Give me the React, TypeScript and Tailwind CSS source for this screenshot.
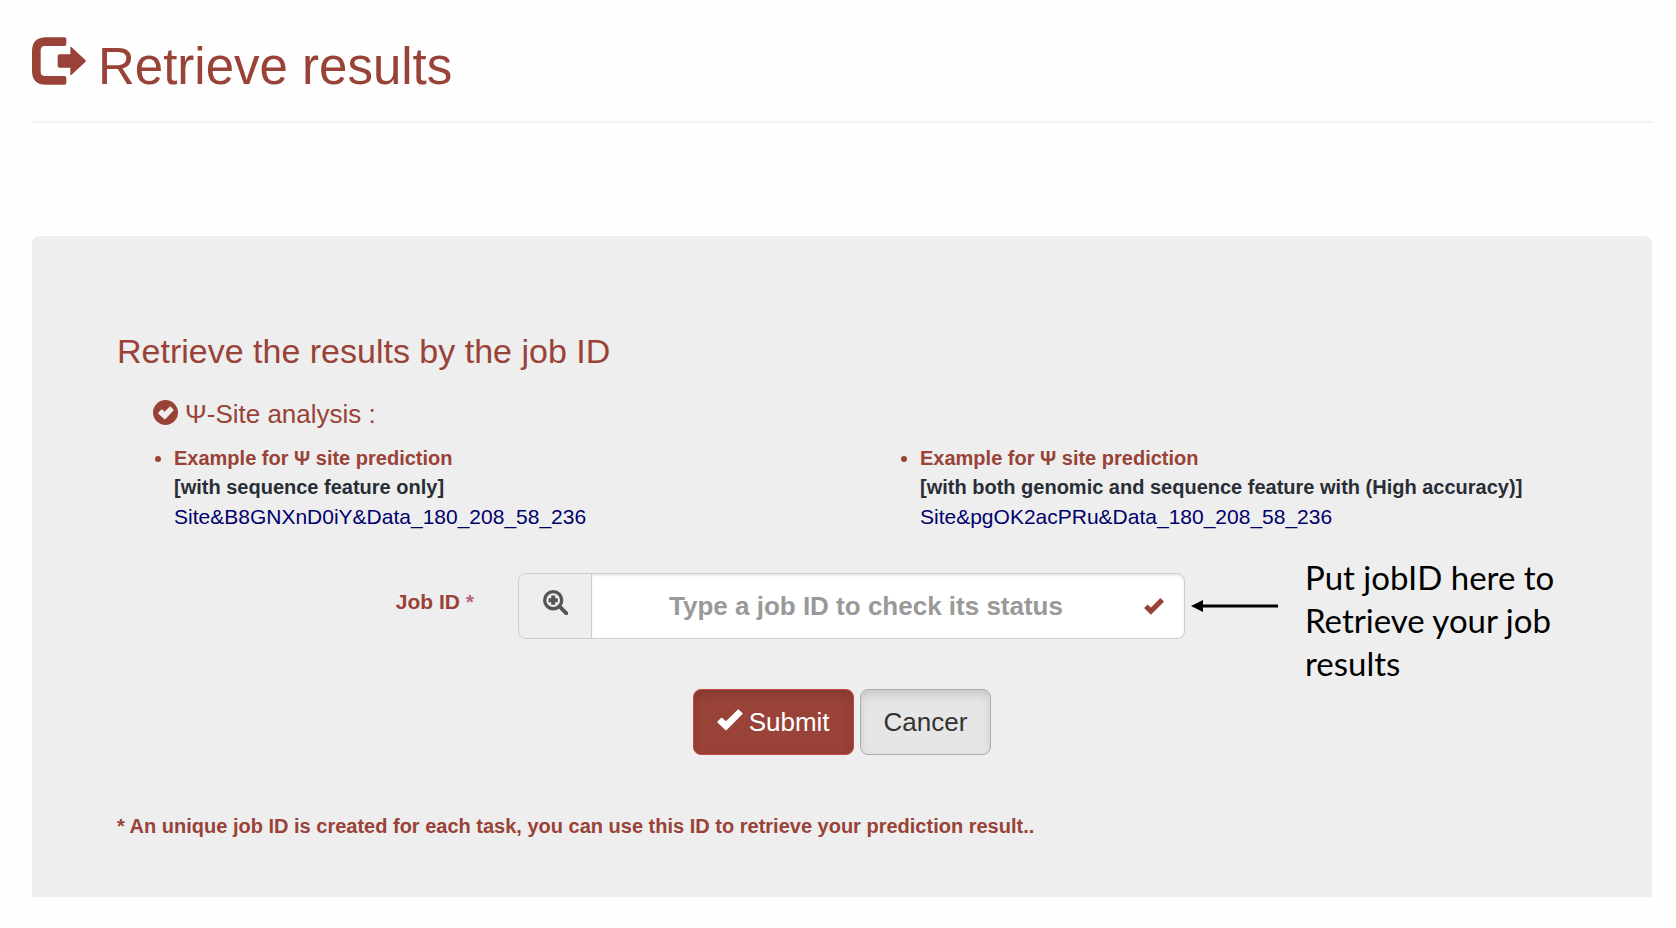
import { useState } from "react";

type Example = {
  note: string;
  jobId: string;
};

const examples: Example[] = [
  {
    note: "[with sequence feature only]",
    jobId: "Site&B8GNXnD0iY&Data_180_208_58_236",
  },
  {
    note: "[with both genomic and sequence feature with (High accuracy)]",
    jobId: "Site&pgOK2acPRu&Data_180_208_58_236",
  },
];

function LogOutIcon({ className }: { className?: string }) {
  return (
    <svg viewBox="0 0 162 142" className={className} fill="currentColor" aria-hidden="true">
      <path d="M42 0h55q6 0 6 6v14q0 6-6 6H39q-13 0-13 13v64q0 13 13 13h58q6 0 6 6v14q0 6-6 6H42Q0 142 0 100V42Q0 0 42 0Z" />
      <path d="M83 51h32V30q0-3 3-1l42 39q3 3 0 6l-42 39q-3 2-3-1V91H83q-6 0-6-6V57q0-6 6-6Z" />
    </svg>
  );
}

function CheckIcon({ className }: { className?: string }) {
  return (
    <svg viewBox="0 0 78 66" className={className} fill="currentColor" aria-hidden="true">
      <path d="M2 37 12 27q2-2 4 0l11 10L62 2q2-2 4 0l10 10q2 2 0 4L29 63q-2 2-4 0L2 41q-2-2 0-4Z" />
    </svg>
  );
}

function OkSignIcon({ className }: { className?: string }) {
  return (
    <svg viewBox="0 0 74 74" className={className} aria-hidden="true">
      <circle cx="37" cy="37" r="37" fill="currentColor" />
      <path
        d="M16 37 24 29q2-2 4 0l6 6 15-15q2-2 4 0l7 8q2 2 0 4L37 56q-2 2-4 0L16 41q-2-2 0-4Z"
        fill="#eee"
      />
    </svg>
  );
}

function ZoomInIcon({ className }: { className?: string }) {
  return (
    <svg viewBox="0 0 76 76" className={className} aria-hidden="true">
      <circle cx="31" cy="31" r="26" fill="none" stroke="currentColor" strokeWidth="10" />
      <path d="M50 50 71 71" stroke="currentColor" strokeWidth="12" strokeLinecap="round" />
      <path d="M25 17h12v8h8v12h-8v8H25v-8h-8V25h8Z" fill="currentColor" />
    </svg>
  );
}

function ArrowLeft({ className }: { className?: string }) {
  return (
    <svg viewBox="0 0 87 12" className={className} aria-hidden="true">
      <path d="M0 6 12 0v12Z" />
      <path d="M10 6h77" stroke="#000" strokeWidth="3" />
    </svg>
  );
}

export default function App() {
  const [jobId, setJobId] = useState("");

  return (
    <div className="min-h-screen bg-[#fefefe] pl-8 pr-6 font-['Liberation_Sans',Arial,sans-serif] text-[#994237]">
      <header className="flex items-start gap-3 border-b-2 border-[#f3f3f3] pt-[37px] pb-6">
        <LogOutIcon className="h-12 w-[54px]" />
        <h1 className="text-[51px] leading-[60px]">Retrieve results</h1>
      </header>

      <main className="mt-[113px] rounded-t-lg bg-[#eee] px-[85px] pt-[95px] pb-14">
        <h2 className="text-[34px] leading-[40px]">Retrieve the results by the job ID</h2>

        <h3 className="mt-7 ml-9 flex items-start gap-[7px] text-[26px] leading-[31px]">
          <OkSignIcon className="mt-px size-[25px]" />
          Ψ-Site analysis :
        </h3>

        <div className="-mx-[21px] mt-3.5 grid grid-cols-2">
          {examples.map((example) => (
            <ul key={example.jobId} className="list-disc pl-[78px] text-xl leading-[29px]">
              <li>
                <strong className="block">Example for Ψ site prediction</strong>
                <strong className="block text-[#292d35]">{example.note}</strong>
                <a
                  href="#job-id"
                  className="block text-[21px] leading-[29px] text-[#00006c]"
                  onClick={() => setJobId(example.jobId)}
                >
                  {example.jobId}
                </a>
              </li>
            </ul>
          ))}
        </div>

        <form onSubmit={(e) => e.preventDefault()}>
          <div className="mt-[25px] grid grid-cols-[401fr_667fr_382fr] items-start">
            <label htmlFor="job-id" className="mt-[31px] pr-11 text-right text-[21px] leading-[30px] font-bold">
              Job ID <span className="text-[#b5647c]">*</span>
            </label>

            <div className="relative mt-[17px] flex h-[66px] rounded-lg border border-[#ccc]">
              <span className="flex w-[72px] shrink-0 items-center justify-center pb-2 text-[#555]">
                <ZoomInIcon className="size-[25px]" />
              </span>
              <input
                id="job-id"
                type="text"
                value={jobId}
                onChange={(e) => setJobId(e.target.value)}
                placeholder="Type a job ID to check its status"
                className="min-w-0 flex-1 rounded-r-lg border-l border-[#ccc] bg-white pr-11 text-center text-[26px] font-bold text-[#555] shadow-[inset_0_2px_2px_rgba(0,0,0,0.075)] outline-none placeholder:text-[#999]"
              />
              <CheckIcon className="absolute top-6 right-5 h-[17px] w-5" />
            </div>

            <div className="flex items-start pl-1.5 text-black">
              <ArrowLeft className="mt-11 h-3 w-[87px] shrink-0" />
              <p className="ml-[27px] w-64 font-['Lato',sans-serif] text-[33px] leading-[43px]">
                Put jobID here to Retrieve your job results
              </p>
            </div>
          </div>

          <div className="mt-1 flex justify-center gap-1.5 text-[26px]">
            <button
              type="submit"
              className="flex h-[66px] items-center gap-1.5 rounded-lg border border-[#c24a43] bg-[#994237] px-[23px] text-white shadow-[inset_0_5px_9px_rgba(0,0,0,0.125)]"
            >
              <CheckIcon className="mb-1 h-[22px] w-[26px]" />
              Submit
            </button>
            <button
              type="button"
              className="h-[66px] rounded-lg border border-[#adadad] bg-[#e6e6e6] px-[23px] text-[#333] shadow-[inset_0_5px_9px_rgba(0,0,0,0.125)]"
              onClick={() => setJobId("")}
            >
              Cancer
            </button>
          </div>
        </form>

        <p className="mt-[57px] text-xl leading-[29px] font-bold">
          * An unique job ID is created for each task, you can use this ID to retrieve your
          prediction result..
        </p>
      </main>
    </div>
  );
}
